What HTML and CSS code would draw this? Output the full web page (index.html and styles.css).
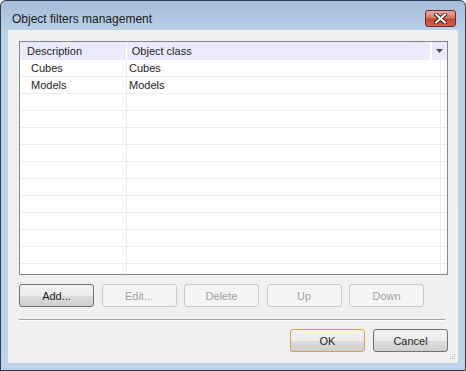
FILE: index.html
```html
<!DOCTYPE html>
<html lang="en">
<head>
  <meta charset="UTF-8">
  <title>Object filters management</title>
  <link rel="stylesheet" href="styles.css">
</head>
<body>

<div class="window">
  <div class="titlebar">
    <span class="title">Object filters management</span>
    <div class="close">
      <svg width="13" height="11" viewBox="0 0 13 11">
        <path d="M2 1.5 L11 9.5 M11 1.5 L2 9.5" stroke="#4a2018" stroke-width="4" stroke-linecap="square"/>
        <path d="M2 1.5 L11 9.5 M11 1.5 L2 9.5" stroke="#ffffff" stroke-width="2" stroke-linecap="square"/>
      </svg>
    </div>
  </div>

  <div class="client">
    <div class="list">
      <div class="list-head">
        <div class="hcell c1">Description</div>
        <div class="hcell c2">Object class</div>
        <div class="hdrop">
          <svg width="7" height="4" viewBox="0 0 7 4"><path d="M0 0 H7 L3.5 4 Z" fill="#4d4d4d"/></svg>
        </div>
      </div>
      <div class="rows">
        <div class="row"><div class="cell c1">Cubes</div><div class="cell c2">Cubes</div></div>
        <div class="row"><div class="cell c1">Models</div><div class="cell c2">Models</div></div>
        <div class="row"><div class="cell c1"></div><div class="cell c2"></div></div>
        <div class="row"><div class="cell c1"></div><div class="cell c2"></div></div>
        <div class="row"><div class="cell c1"></div><div class="cell c2"></div></div>
        <div class="row"><div class="cell c1"></div><div class="cell c2"></div></div>
        <div class="row"><div class="cell c1"></div><div class="cell c2"></div></div>
        <div class="row"><div class="cell c1"></div><div class="cell c2"></div></div>
        <div class="row"><div class="cell c1"></div><div class="cell c2"></div></div>
        <div class="row"><div class="cell c1"></div><div class="cell c2"></div></div>
        <div class="row"><div class="cell c1"></div><div class="cell c2"></div></div>
        <div class="row"><div class="cell c1"></div><div class="cell c2"></div></div>
        <div class="row"><div class="cell c1"></div><div class="cell c2"></div></div>
      </div>
    </div>

    <div class="actions">
      <button class="btn">Add...</button>
      <button class="btn" disabled>Edit...</button>
      <button class="btn" disabled>Delete</button>
      <button class="btn" disabled>Up</button>
      <button class="btn" disabled>Down</button>
    </div>

    <div class="sep"></div>

    <div class="footer">
      <button class="btn default">OK</button>
      <button class="btn">Cancel</button>
    </div>

    <svg class="grip" width="6" height="6" viewBox="0 0 6 6">
      <rect x="4" y="0" width="1" height="1" fill="#b0b0b0"/>
      <rect x="2" y="2" width="1" height="1" fill="#b0b0b0"/>
      <rect x="4" y="2" width="1" height="1" fill="#b0b0b0"/>
      <rect x="0" y="4" width="1" height="1" fill="#b0b0b0"/>
      <rect x="2" y="4" width="1" height="1" fill="#b0b0b0"/>
      <rect x="4" y="4" width="1" height="1" fill="#b0b0b0"/>
    </svg>
  </div>
</div>

</body>
</html>
```

FILE: styles.css
```css
body {
  margin: 0;
  padding: 0;
  background: #ffffff;
  font-family: "Liberation Sans", Arial, sans-serif;
  font-size: 11px;
  color: #1e1e1e;
}
.window {
  width: 466px;
  height: 371px;
  box-sizing: border-box;
  border: 1px solid #2f3d4f;
  border-radius: 6px 6px 0 0;
  background: linear-gradient(#a3bcd9, #bad1ea 30px, #bcd3eb);
  display: flex;
  flex-direction: column;
}
.titlebar {
  height: 29px;
  display: flex;
  align-items: flex-start;
}
.title {
  font-size: 12px;
  color: #1b1b1b;
  padding: 10px 0 0 11px;
  line-height: 16px;
  flex: 1;
}
.close {
  width: 31px;
  height: 17px;
  margin: 9px 9px 0 0;
  box-sizing: border-box;
  border: 1px solid #6e2a22;
  border-radius: 3px;
  background: linear-gradient(#e9a99c, #d57868 45%, #c24a36 55%, #d0614c);
  display: flex;
  align-items: center;
  justify-content: center;
}
.client {
  position: relative;
  flex: 1;
  margin: 0 7px 7px 7px;
  background: #f0f0f0;
  padding: 11px 10px 0 11px;
}
.list {
  height: 234px;
  box-sizing: border-box;
  border: 1px solid #828790;
  background: #ffffff;
  overflow: hidden;
}
.list-head {
  display: flex;
  height: 18px;
  line-height: 18px;
}
.hcell {
  background: #eaeafc;
  box-sizing: border-box;
  border-right: 1px solid #ffffff;
}
.hcell.c1 {
  width: 107px;
  padding-left: 7px;
}
.hcell.c2 {
  width: 305px;
  padding-left: 5px;
}
.hdrop {
  margin-left: 1px;
  width: 15px;
  background: #eaeafc;
  display: flex;
  align-items: center;
  justify-content: center;
}
.row {
  display: flex;
  height: 17px;
  box-sizing: border-box;
  border-bottom: 1px solid #ececec;
  line-height: 16px;
}
.cell {
  box-sizing: border-box;
  border-right: 1px solid #ececec;
}
.cell.c1 {
  width: 107px;
  padding-left: 11px;
}
.cell.c2 {
  width: 314px;
  padding-left: 2px;
}
.actions {
  display: flex;
  gap: 7.5px;
  margin-top: 9px;
}
.btn {
  width: 75px;
  height: 23px;
  box-sizing: border-box;
  border: 1px solid #707070;
  border-radius: 3px;
  background: linear-gradient(#f2f2f2, #ebebeb 50%, #dddddd 51%, #cfcfcf);
  font-family: "Liberation Sans", Arial, sans-serif;
  font-size: 11px;
  color: #1e1e1e;
  padding: 0;
}
.btn:disabled {
  border-color: #c9c9c9;
  background: #f4f4f4;
  color: #a0a0a0;
}
.btn.default {
  border-color: #d7a24a;
}
.sep {
  margin-top: 12px;
  width: 426px;
  height: 1px;
  background: #a0a0a0;
  border-bottom: 1px solid #ffffff;
}
.footer {
  display: flex;
  justify-content: flex-end;
  gap: 8px;
  margin-top: 8px;
}
.grip {
  position: absolute;
  right: 2px;
  bottom: 3px;
}
```
